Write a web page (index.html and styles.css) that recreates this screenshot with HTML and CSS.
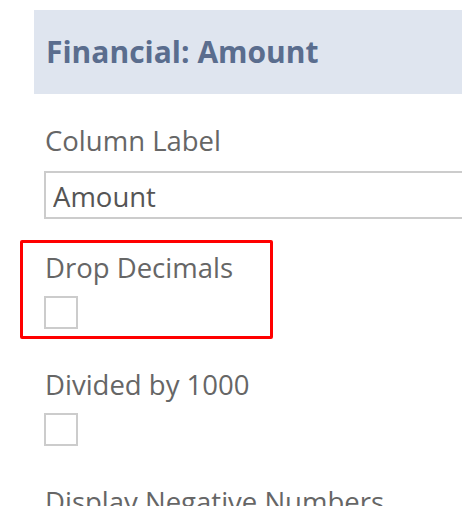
FILE: index.html
```html
<!DOCTYPE html>
<html>
<head>
<meta charset="utf-8">
<link rel="stylesheet" href="styles.css">
</head>
<body>
<div class="page">
  <div class="header"><h1 class="title">Financial: Amount</h1></div>
  <div class="form">
    <div class="field">
      <div class="label">Column Label</div>
      <input class="text-input" type="text" value="Amount">
    </div>
    <div class="field highlighted">
      <div class="label">Drop Decimals</div>
      <span class="checkbox"></span>
    </div>
    <div class="field">
      <div class="label">Divided by 1000</div>
      <span class="checkbox"></span>
    </div>
    <div class="field">
      <div class="label">Display Negative Numbers</div>
    </div>
  </div>
</div>
</body>
</html>
```
FILE: styles.css
```css
html, body {
  margin: 0;
  padding: 0;
  background: #ffffff;
  overflow: hidden;
}
body {
  width: 462px;
  height: 506px;
  font-family: "Open Sans", "Liberation Sans", sans-serif;
  color: #666666;
}
.page {
  height: 506px;
  overflow: hidden;
  box-sizing: border-box;
  padding: 10px 0 0 34px;
}
.header {
  background: #dfe5ef;
  height: 84px;
  display: flex;
  align-items: center;
  padding-left: 12px;
}
.title {
  margin: 0;
  font-size: 30px;
  font-weight: 700;
  color: #5a6d8e;
  line-height: 34px;
}
.form {
  padding: 30px 0 0 10px;
}
.field {
  position: relative;
  display: flex;
  flex-direction: column;
  align-items: flex-start;
  margin-bottom: 32px;
}
.label {
  font-size: 27.5px;
  line-height: 34px;
  padding-left: 1px;
  margin-bottom: 13px;
  white-space: nowrap;
}
.text-input {
  display: block;
  box-sizing: border-box;
  width: 440px;
  height: 48px;
  margin: 0;
  border: 2px solid #cccccc;
  padding: 2px 7px 0;
  font-family: "Open Sans", "Liberation Sans", sans-serif;
  font-size: 27.5px;
  color: #555555;
  background: #ffffff;
  outline: none;
}
.checkbox {
  display: block;
  box-sizing: border-box;
  width: 34px;
  height: 33px;
  margin-top: -2px;
  margin-bottom: 7px;
  border: 2px solid #cccccc;
  background: #ffffff;
}
.highlighted::after {
  content: "";
  position: absolute;
  left: -24px;
  top: -11px;
  width: 253px;
  height: 99px;
  box-sizing: border-box;
  border: 3px solid #ff0000;
  border-radius: 2px;
}
```
